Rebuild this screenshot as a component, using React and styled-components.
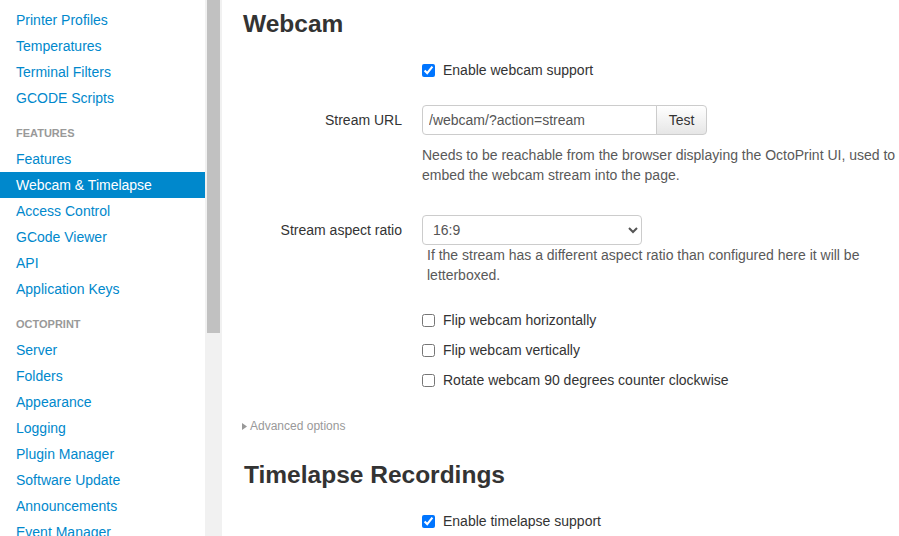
import React from "react";
import styled, { createGlobalStyle } from "styled-components";

const GlobalStyle = createGlobalStyle`
  html, body {
    margin: 0;
    padding: 0;
    background: #fff;
    font-family: "Liberation Sans", Arial, sans-serif;
    font-size: 14px;
    color: #333;
  }
`;

const sections = [
  {
    items: ["Printer Profiles", "Temperatures", "Terminal Filters", "GCODE Scripts"],
  },
  {
    header: "Features",
    items: [
      "Features",
      "Webcam & Timelapse",
      "Access Control",
      "GCode Viewer",
      "API",
      "Application Keys",
    ],
  },
  {
    header: "OctoPrint",
    items: [
      "Server",
      "Folders",
      "Appearance",
      "Logging",
      "Plugin Manager",
      "Software Update",
      "Announcements",
      "Event Manager",
    ],
  },
];

const App = () => {
  return (
    <>
      <GlobalStyle />
      <Page>
        <Sidebar>
          <NavList>
            {sections.map((s, i) => (
              <React.Fragment key={i}>
                {s.header && <NavHeader>{s.header}</NavHeader>}
                {s.items.map((item) => (
                  <NavItem key={item} active={item === "Webcam & Timelapse"}>
                    {item}
                  </NavItem>
                ))}
              </React.Fragment>
            ))}
          </NavList>
          <ScrollTrack>
            <ScrollThumb />
          </ScrollTrack>
        </Sidebar>

        <Content>
          <Title>Webcam</Title>

          <Row top="16px">
            <Label />
            <Controls>
              <CheckLabel>
                <input type="checkbox" defaultChecked />
                Enable webcam support
              </CheckLabel>
            </Controls>
          </Row>

          <Row top="25px">
            <Label>Stream URL</Label>
            <Controls>
              <InputGroup>
                <TextInput type="text" defaultValue="/webcam/?action=stream" />
                <Button>Test</Button>
              </InputGroup>
              <Help top="10px">
                Needs to be reachable from the browser displaying the OctoPrint UI, used to
                embed the webcam stream into the page.
              </Help>
            </Controls>
          </Row>

          <Row top="30px">
            <Label>Stream aspect ratio</Label>
            <Controls>
              <Select defaultValue="16:9">
                <option>16:9</option>
                <option>4:3</option>
              </Select>
              <Help indent>
                If the stream has a different aspect ratio than configured here it will be
                letterboxed.
              </Help>
            </Controls>
          </Row>

          <Row top="25px">
            <Label />
            <Controls>
              <CheckList>
                <CheckLabel>
                  <input type="checkbox" />
                  Flip webcam horizontally
                </CheckLabel>
                <CheckLabel>
                  <input type="checkbox" />
                  Flip webcam vertically
                </CheckLabel>
                <CheckLabel>
                  <input type="checkbox" />
                  Rotate webcam 90 degrees counter clockwise
                </CheckLabel>
              </CheckList>
            </Controls>
          </Row>

          <Advanced>
            <svg width="5" height="7" viewBox="0 0 5 7">
              <path d="M0 0 L5 3.5 L0 7 Z" fill="#999" />
            </svg>
            Advanced options
          </Advanced>

          <Title top="19px" indent="2px">
            Timelapse Recordings
          </Title>

          <Row top="16px">
            <Label />
            <Controls>
              <CheckLabel>
                <input type="checkbox" defaultChecked />
                Enable timelapse support
              </CheckLabel>
            </Controls>
          </Row>
        </Content>
      </Page>
    </>
  );
};

export default App;

const Page = styled.div`
  display: flex;
  width: 100%;
  height: 100vh;
  overflow: hidden;
`;

const Sidebar = styled.div`
  display: flex;
  flex-shrink: 0;
  height: 100%;
`;

const NavList = styled.div`
  width: 205px;
  padding-top: 7px;
  display: flex;
  flex-direction: column;
  overflow: hidden;
`;

const NavHeader = styled.div`
  margin-top: 9px;
  height: 26px;
  line-height: 26px;
  padding-left: 16px;
  font-size: 11px;
  font-weight: bold;
  text-transform: uppercase;
  color: #999;
`;

const NavItem = styled.a`
  display: block;
  flex-shrink: 0;
  height: 26px;
  line-height: 26px;
  padding-left: 16px;
  font-size: 14px;
  text-decoration: none;
  cursor: pointer;
  color: ${(p) => (p.active ? "#fff" : "#0088cc")};
  background: ${(p) => (p.active ? "#0088cc" : "transparent")};
`;

const ScrollTrack = styled.div`
  width: 17px;
  height: 100%;
  background: #f1f1f1;
  display: flex;
  justify-content: center;
`;

const ScrollThumb = styled.div`
  width: 13px;
  height: 333px;
  background: #c1c1c1;
`;

const Content = styled.div`
  flex: 1;
  padding: 4px 0 0 20px;
`;

const Title = styled.h3`
  margin: ${(p) => p.top || "0"} 0 0 ${(p) => p.indent || "1px"};
  font-size: 24.5px;
  line-height: 40px;
  font-weight: bold;
  color: #333;
`;

const Row = styled.div`
  display: flex;
  margin-top: ${(p) => p.top || "0"};
`;

const Label = styled.label`
  width: 160px;
  flex-shrink: 0;
  text-align: right;
  line-height: 30px;
  color: #333;
`;

const Controls = styled.div`
  margin-left: 20px;
  flex: 1;
`;

const CheckList = styled.div`
  display: flex;
  flex-direction: column;
  gap: 10px;
`;

const CheckLabel = styled.label`
  display: flex;
  align-items: center;
  height: 20px;
  line-height: 20px;
  color: #333;

  input {
    width: 13px;
    height: 13px;
    margin: 0 8px 0 0;
  }
`;

const InputGroup = styled.div`
  display: flex;
  height: 30px;
`;

const TextInput = styled.input`
  box-sizing: border-box;
  width: 235px;
  height: 30px;
  padding: 0 6px;
  border: 1px solid #ccc;
  border-radius: 4px 0 0 4px;
  font-family: "Liberation Sans", Arial, sans-serif;
  font-size: 14px;
  color: #555;
  outline: none;
`;

const Button = styled.button`
  box-sizing: border-box;
  width: 51px;
  height: 30px;
  margin-left: -1px;
  border: 1px solid #ccc;
  border-radius: 0 4px 4px 0;
  background: linear-gradient(#ffffff, #e6e6e6);
  font-family: "Liberation Sans", Arial, sans-serif;
  font-size: 14px;
  color: #333;
`;

const Select = styled.select`
  box-sizing: border-box;
  width: 220px;
  height: 30px;
  padding: 0 6px;
  border: 1px solid #ccc;
  border-radius: 4px;
  background: #fff;
  font-family: "Liberation Sans", Arial, sans-serif;
  font-size: 14px;
  color: #555;
  outline: none;
`;

const Help = styled.p`
  margin: ${(p) => p.top || "0"} 0 0 ${(p) => (p.indent ? "5px" : "0")};
  line-height: 20px;
  color: #595959;
`;

const Advanced = styled.div`
  display: flex;
  align-items: center;
  gap: 3px;
  margin-top: 26px;
  line-height: 20px;
  font-size: 12px;
  color: #999;
`;
